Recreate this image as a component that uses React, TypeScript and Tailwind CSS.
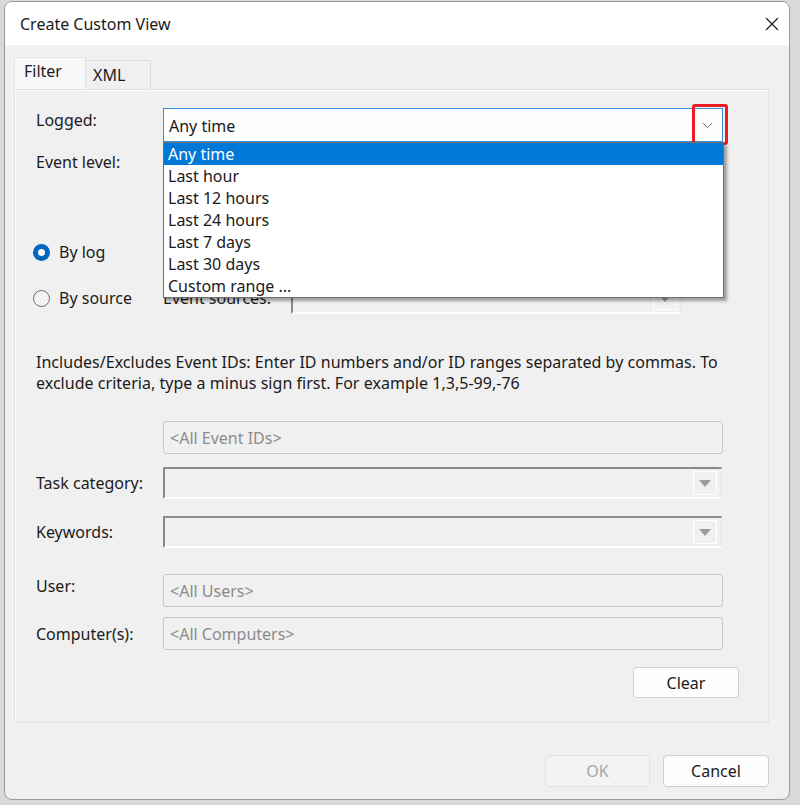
import { ChevronDown, X } from "lucide-react";

const font = "font-['Segoe_UI','Noto_Sans',sans-serif]";

const timeOptions = [
  "Any time",
  "Last hour",
  "Last 12 hours",
  "Last 24 hours",
  "Last 7 days",
  "Last 30 days",
  "Custom range ...",
];

const ComboArrow = () => (
  <div className="flex h-full w-[24px] items-center justify-center border border-white">
    <svg width="12" height="7" viewBox="0 0 12 7">
      <path d="M0 0h12L6 7z" fill="#9a9a9a" />
    </svg>
  </div>
);

const DisabledCombo = ({ className = "" }: { className?: string }) => (
  <div
    className={`flex h-[32px] items-stretch justify-end border-t-2 border-l-2 border-t-[#8a8a8a] border-l-[#8a8a8a] border-b-2 border-r border-b-white border-r-[#e4e4e4] bg-[#f0f0f0] py-[2px] pr-[4px] ${className}`}
  >
    <ComboArrow />
  </div>
);

const DisabledField = ({ text }: { text: string }) => (
  <div className="flex h-[33px] w-[560px] items-center rounded-[3px] border border-[#c6c6c6] bg-[#f0f0f0] px-[6px] text-[16px] text-[#8c8c8c]">
    {text}
  </div>
);

const Row = ({ label, children, className = "" }: { label: string; children: React.ReactNode; className?: string }) => (
  <div className={`flex items-center ${className}`}>
    <div className="w-[127px] text-[16px] text-[#1b1b1b]">{label}</div>
    {children}
  </div>
);

export default function App() {
  return (
    <div className={`h-[805px] w-[800px] overflow-hidden bg-[#d9d9d9] pl-[4px] pt-[1px] ${font}`}>
      <div className="flex h-[799px] w-[786px] flex-col overflow-hidden rounded-[8px] border border-[#9a9a9a] bg-[#f0f0f0]">
        {/* title bar */}
        <div className="flex h-[43px] shrink-0 items-center justify-between bg-white pl-[15px] pr-[6px]">
          <span className="text-[16px] text-[#1a1a1a]">Create Custom View</span>
          <X size={22} strokeWidth={1.4} className="text-[#222]" />
        </div>

        <div className="flex flex-col pl-[9px] pr-[20px] pt-[12px]">
          {/* tabs */}
          <div className="flex items-end">
            <div className="flex h-[32px] w-[72px] items-start border border-b-0 border-[#e4e4e4] bg-[#f9f9f9] pl-[9px] pt-[1px] text-[16px] text-[#1a1a1a]">
              Filter
            </div>
            <div className="flex h-[29px] w-[65px] items-start border border-b-0 border-l-0 border-[#dcdcdc] bg-[#f0f0f0] pl-[7px] pt-[2px] text-[16px] text-[#1a1a1a]">
              XML
            </div>
          </div>

          {/* tab panel */}
          <div className="relative flex h-[634px] flex-col border border-[#e2e2e2] bg-[#f0f0f0] pl-[21px] pr-[44px] pt-[18px] shadow-[inset_1px_1px_0_#fafafa]">
            <Row label="Logged:" className="items-start">
              <div className="relative">
                <div className="flex h-[34px] w-[560px] items-center justify-between border border-[#3c8fdc] bg-[#fdfdfd] pl-[5px] text-[16px] text-[#1a1a1a]">
                  <span className="pt-[1px]">Any time</span>
                  <div className="flex h-full w-[30px] items-center justify-center">
                    <ChevronDown size={17} strokeWidth={1.4} className="text-[#6e6e6e]" />
                  </div>
                </div>
                <div className="absolute right-[-5px] top-[-4px] h-[41px] w-[36px] rounded-[3px] border-[3px] border-[#ea1c24]" />
                {/* open dropdown */}
                <div className="absolute left-0 top-[34px] z-10 w-[561px] border border-[#6f6f6f] bg-white shadow-[3px_3px_3px_rgba(0,0,0,0.35)]">
                  {timeOptions.map((o, i) => (
                    <div
                      key={o}
                      className={`flex h-[22px] items-center pl-[4px] text-[16px] ${
                        i === 0 ? "bg-[#0078d7] text-white" : "text-[#1a1a1a]"
                      }`}
                    >
                      {o}
                    </div>
                  ))}
                </div>
              </div>
            </Row>

            <Row label="Event level:" className="mt-[8px]">
              <div className="h-[24px]" />
            </Row>

            <div className="ml-[-3px] mt-[66px] flex items-center">
              <div className="flex h-[17px] w-[17px] items-center justify-center rounded-full bg-[#0067c0]">
                <div className="h-[7px] w-[7px] rounded-full bg-white" />
              </div>
              <span className="ml-[9px] text-[16px] text-[#1a1a1a]">By log</span>
            </div>

            <div className="ml-[-3px] mt-[18px] flex items-center">
              <div className="h-[17px] w-[17px] rounded-full border border-[#6b6b6b] bg-[#f4f4f4]" />
              <span className="ml-[9px] w-[104px] text-[16px] text-[#1a1a1a]">By source</span>
              <span className="text-[16px] text-[#1a1a1a]">Event sources:</span>
              <DisabledCombo className="ml-[20px] w-[391px]" />
            </div>

            <p className="mt-[38px] text-[16px] leading-[21px] tracking-[0.03px] text-[#1a1a1a]">
              Includes/Excludes Event IDs: Enter ID numbers and/or ID ranges separated by commas. To exclude criteria, type a minus sign first. For example 1,3,5-99,-76
            </p>

            <div className="mt-[27px] pl-[127px]">
              <DisabledField text="<All Event IDs>" />
            </div>

            <Row label="Task category:" className="mt-[13px]">
              <DisabledCombo className="w-[559px]" />
            </Row>

            <Row label="Keywords:" className="mt-[17px]">
              <DisabledCombo className="w-[559px]" />
            </Row>

            <Row label="User:" className="mt-[26px] items-start">
              <DisabledField text="<All Users>" />
            </Row>

            <Row label="Computer(s):" className="mt-[10px]">
              <DisabledField text="<All Computers>" />
            </Row>

            <div className="mr-[-15px] mt-[17px] flex justify-end">
              <button className="h-[31px] w-[106px] rounded-[4px] border border-[#cfcfcf] bg-[#fdfdfd] text-[16px] text-[#1a1a1a]">
                Clear
              </button>
            </div>
          </div>

          {/* footer buttons */}
          <div className="mt-[32px] flex justify-end gap-[13px]">
            <button className="h-[32px] w-[105px] rounded-[4px] border border-[#e2e2e2] bg-[#f3f3f3] text-[16px] text-[#a6a6a6]">
              OK
            </button>
            <button className="h-[32px] w-[106px] rounded-[4px] border border-[#cfcfcf] bg-[#fdfdfd] text-[16px] text-[#1a1a1a]">
              Cancel
            </button>
          </div>
        </div>
      </div>
    </div>
  );
}
